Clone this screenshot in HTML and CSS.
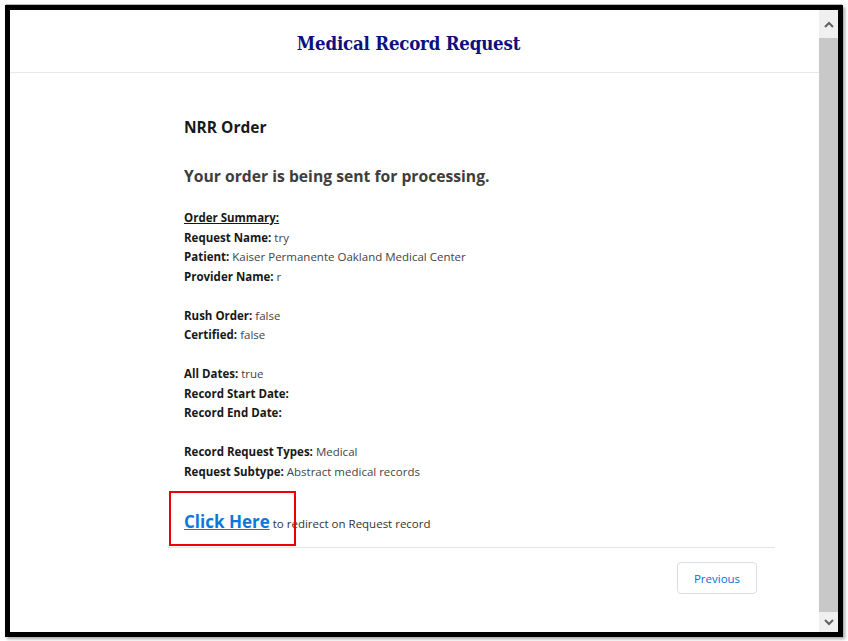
FILE: index.html
```html
<!DOCTYPE html>
<html>
<head>
<meta charset="utf-8">
<link rel="stylesheet" href="styles.css">
</head>
<body>
<div class="frame">
  <div class="page">
    <header class="header">
      <h1 class="title">Medical Record Request</h1>
    </header>
    <main class="content">
      <h2 class="order-title">NRR Order</h2>
      <h3 class="status">Your order is being sent for processing.</h3>
      <div class="summary">
        <div class="summary-head">Order Summary:</div>
        <div class="row"><b>Request Name:</b> try</div>
        <div class="row"><b>Patient:</b> Kaiser Permanente Oakland Medical Center</div>
        <div class="row"><b>Provider Name:</b> r</div>
        <div class="gap"></div>
        <div class="row"><b>Rush Order:</b> false</div>
        <div class="row"><b>Certified:</b> false</div>
        <div class="gap"></div>
        <div class="row"><b>All Dates:</b> true</div>
        <div class="row"><b>Record Start Date:</b></div>
        <div class="row"><b>Record End Date:</b></div>
        <div class="gap"></div>
        <div class="row"><b>Record Request Types:</b> Medical</div>
        <div class="row"><b>Request Subtype:</b> Abstract medical records</div>
      </div>
      <div class="redirect">
        <a class="link" href="#">Click Here</a> to redirect on Request record
        <span class="highlight"></span>
      </div>
      <div class="footer">
        <button class="btn">Previous</button>
      </div>
    </main>
  </div>
  <div class="scrollbar">
    <div class="arrow up"><svg width="10" height="7" viewBox="0 0 10 7"><path d="M1 6 L5 2 L9 6" fill="none" stroke="#606060" stroke-width="2"/></svg></div>
    <div class="thumb"></div>
    <div class="arrow down"><svg width="10" height="7" viewBox="0 0 10 7"><path d="M1 1 L5 5 L9 1" fill="none" stroke="#606060" stroke-width="2"/></svg></div>
  </div>
</div>
</body>
</html>
```
FILE: styles.css
```css
* { box-sizing: border-box; }
html, body { margin: 0; padding: 0; background: #fff; }
body { width: 848px; height: 641px; overflow: hidden; font-family: "Open Sans", "Noto Sans", sans-serif; }

.frame {
  margin: 5px 0 0 5px;
  width: 838px;
  height: 632px;
  border: 5px solid #000;
  box-shadow: 2px 2px 3px rgba(0,0,0,0.35), 0 -2px 0 -1px #bbb;
  display: flex;
  background: #fff;
}

.page { flex: 1; display: flex; flex-direction: column; }

.header {
  height: 63px;
  border-bottom: 1px solid #e8e8e8;
  display: flex;
  align-items: center;
  justify-content: center;
  padding-top: 5px;
  padding-right: 12px;
}
.title {
  margin: 0;
  font-family: "DejaVu Serif Condensed", "Liberation Serif", serif;
  font-weight: bold;
  font-size: 18.5px;
  color: #10107a;
  letter-spacing: -0.2px;
}

.content {
  margin-left: 158px;
  width: 607px;
  padding-top: 43px;
}
.order-title {
  margin: 0 0 0 16px;
  font-size: 15.5px;
  font-weight: 700;
  color: #181818;
  line-height: 22px;
}
.status {
  margin: 26px 0 0 16px;
  font-size: 15.7px;
  font-weight: 700;
  color: #3e3e3c;
  line-height: 24px;
}
.summary {
  margin: 20px 0 0 16px;
  font-size: 11.5px;
  line-height: 19.5px;
  color: #444;
}
.summary b { color: #181818; font-weight: 700; }
.summary-head { font-weight: 700; color: #181818; text-decoration: underline; }
.gap { height: 19.5px; }

.redirect {
  position: relative;
  margin: 28px 0 0 16px;
  font-size: 11.5px;
  color: #333;
  height: 26px;
  line-height: 26px;
}
.link {
  font-size: 17px;
  font-weight: 700;
  color: #0b78d8;
  text-decoration: underline;
}
.highlight {
  position: absolute;
  left: -15px;
  top: -18px;
  width: 127px;
  height: 55px;
  border: 2.5px solid #f00000;
}

.footer {
  margin-top: 12px;
  border-top: 1px solid #e5e5e5;
  padding: 14px 18px 0 0;
  display: flex;
  justify-content: flex-end;
}
.btn {
  width: 80px;
  height: 32px;
  border: 1px solid #d8dde6;
  border-radius: 4px;
  background: #fff;
  color: #0a70d0;
  font-family: "Open Sans", "Noto Sans", sans-serif;
  font-size: 11.5px;
}

.scrollbar {
  width: 19px;
  display: flex;
  flex-direction: column;
  background: #c8c8c8;
}
.arrow {
  height: 28px;
  background: #f0f0f0;
  display: flex;
  justify-content: center;
  align-items: center;
}
.arrow.down { height: 20px; background: #f0f0f0; }
.thumb { flex: 1; background: #c8c8c8; }
```
